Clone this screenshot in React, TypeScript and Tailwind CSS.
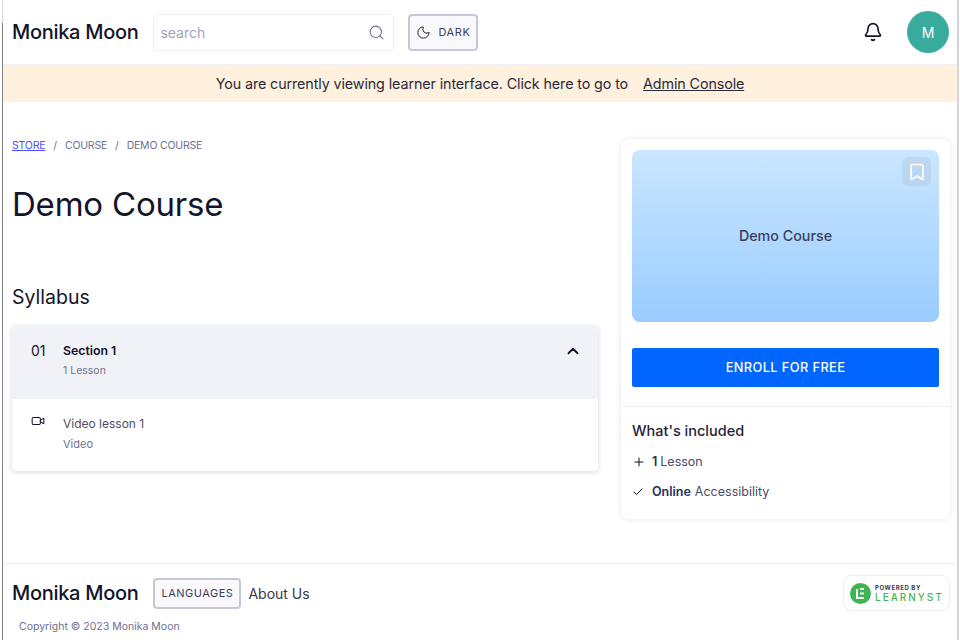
import { Bell, Bookmark, Check, ChevronUp, Moon, Plus, Search, Video } from 'lucide-react'

const font = "font-['Inter','Noto_Sans',sans-serif]"

function Brand() {
  return <span className="text-[20px] font-medium leading-none tracking-[-0.3px] text-[#14142b]">Monika Moon</span>
}

// ── Learnyst badge ──────────────────────────────────────────────────────────
function PoweredBy() {
  return (
    <div className="flex h-[36px] w-[107px] items-center gap-[4px] rounded-[8px] border border-[#eceef5] pl-[6px]">
      <svg width="21" height="21" viewBox="0 0 21 21" className="shrink-0">
        <circle cx="10.5" cy="10.5" r="10.5" fill="#3fb552" />
        <path d="M7 6v9h7M10 6h4M10 10.5h4" fill="none" stroke="#fff" strokeWidth="2" />
      </svg>
      <div className="flex flex-col">
        <span className="text-[6px] font-bold leading-[8px] tracking-[0.6px] text-[#3a3a4a]">POWERED BY</span>
        <span className="text-[10px] font-medium leading-[11px] tracking-[2px] text-[#3fb552]">LEARNYST</span>
      </div>
    </div>
  )
}

export default function App() {
  return (
    <div className={`relative flex h-[640px] w-[960px] flex-col overflow-hidden bg-white ${font}`}>
      {/* Lighter stretch of the window edge at the top left */}
      <div className="absolute top-0 left-[2px] h-[23px] w-px bg-[#d8d8d8]" />
      <div className="mr-[1px] ml-[2px] flex h-full flex-col border-r-2 border-l border-r-[#d4d4d8] border-l-[#808080]">
        {/* Header */}
        <header className="flex h-[66px] shrink-0 items-center border-b-2 border-[#eff0f6] pr-[8px] pl-[9px]">
          <Brand />
          <div className="ml-[15px] flex h-[37px] w-[241px] items-center justify-between rounded-[4px] border border-[#eff0f6] pr-[8px] pl-[6px]">
            <span className="text-[14px] text-[#a0a3bd]">search</span>
            <Search size={17} strokeWidth={1.5} className="text-[#6e7191]" />
          </div>
          <button className="ml-[14px] flex h-[37px] w-[70px] items-center justify-center gap-[7px] rounded-[4px] border-2 border-[#c5c8d8] bg-[#f9f9fc]">
            <Moon size={15} strokeWidth={1.5} className="text-[#14142b]" />
            <span className="text-[11px] font-normal tracking-[0.6px] text-[#3a3f5c]">DARK</span>
          </button>
          <Bell size={20} strokeWidth={2} className="mr-[24px] ml-auto text-[#14142b]" />
          <div className="flex h-[42px] w-[42px] items-center justify-center rounded-full bg-[#3aab9f] text-[14px] font-normal text-white">M</div>
        </header>

        {/* Admin banner */}
        <div className="flex h-[36px] shrink-0 items-center justify-center gap-[15px] bg-[#fff1de] text-[14.3px] tracking-[-0.1px] text-[#2a2a3c]">
          <span>You are currently viewing learner interface. Click here to go to</span>
          <a className="underline">Admin Console</a>
        </div>

        {/* Main */}
        <main className="flex flex-1 items-start pr-[7px] pl-[9px]">
          <div className="w-[586px] shrink-0 pt-[36px]">
            <div className="flex items-center gap-[8px] text-[10.5px] leading-[16px] tracking-[-0.2px] text-[#6e7191]">
              <a className="text-[#4d4dff] underline">STORE</a>
              <span>/</span>
              <span>COURSE</span>
              <span>/</span>
              <span>DEMO COURSE</span>
            </div>
            <h1 className="mt-[28px] text-[33px] leading-[44px] font-normal tracking-[-0.2px] text-[#14142b]">Demo Course</h1>
            <h2 className="mt-[57px] text-[19.5px] leading-[28px] font-normal text-[#14142b]">Syllabus</h2>
            <div className="mt-[15px] overflow-hidden rounded-[4px] bg-white shadow-[0_1px_5px_rgba(20,20,43,0.18)]">
              <div className="flex h-[73px] items-start bg-[#f1f2f7] pt-[16px] pr-[16px] pl-[19px]">
                <span className="w-[32px] text-[14px] leading-[18px] text-[#14142b]">01</span>
                <div className="flex-1">
                  <div className="text-[12.3px] leading-[18px] font-semibold text-[#14142b]">Section 1</div>
                  <div className="mt-[2px] text-[10.5px] leading-[18px] text-[#6e7191]">1 Lesson</div>
                </div>
                <ChevronUp size={18} strokeWidth={2.5} className="text-[#14142b]" />
              </div>
              <div className="flex h-[72px] items-start pt-[16px] pl-[19px]">
                <Video size={14} strokeWidth={1.75} className="mt-[-1px] mr-[18px] text-[#14142b]" />
                <div>
                  <div className="text-[12px] leading-[18px] text-[#4e4b66]">Video lesson 1</div>
                  <div className="mt-[2px] text-[11px] leading-[18px] text-[#6e7191]">Video</div>
                </div>
              </div>
            </div>
          </div>

          {/* Course card */}
          <aside className="mt-[37px] ml-[23px] h-[380px] w-[329px] shrink-0 rounded-[8px] bg-white pt-[11px] shadow-[0_0_6px_rgba(20,20,43,0.1)]">
            <div className="px-[11px]">
              <div className="relative flex h-[172px] items-center justify-center rounded-[8px] bg-gradient-to-b from-[#cae6ff] to-[#9accff] text-[14.3px] font-medium text-[#3a3f5c]">
                Demo Course
                <div className="absolute top-[7px] right-[8px] flex h-[29px] w-[29px] items-center justify-center rounded-[6px] bg-[#a9b8cc]/30">
                  <Bookmark size={20} strokeWidth={2} className="text-white" />
                </div>
              </div>
              <button className="mt-[26px] h-[39px] w-full rounded-[2px] bg-[#0066ff] text-[12.8px] font-medium tracking-[0.4px] text-white">ENROLL FOR FREE</button>
            </div>
            <div className="mt-[19px] border-t border-[#eff0f6] px-[11px] pt-[15px]">
              <div className="text-[14.5px] leading-[18px] font-medium text-[#262338]">What's included</div>
              <div className="mt-[13px] flex h-[18px] items-center text-[12.5px] text-[#4e4b66]">
                <Plus size={14} strokeWidth={1.75} className="mr-[6px] text-[#14142b]" />
                <b className="mr-[3px] font-semibold text-[#262f56]">1</b> Lesson
              </div>
              <div className="mt-[12px] flex h-[18px] items-center text-[12.5px] text-[#4e4b66]">
                <Check size={12} strokeWidth={2} className="mr-[8px] text-[#14142b]" />
                <b className="mr-[4px] font-semibold text-[#262f56]">Online</b> Accessibility
              </div>
            </div>
          </aside>
        </main>

        {/* Footer */}
        <footer className="h-[77px] shrink-0 border-t border-[#eff0f6] pt-[11px] pr-[7px] pl-[9px]">
          <div className="flex items-center">
            <Brand />
            <button className="ml-[15px] flex h-[31px] w-[88px] items-center justify-center rounded-[4px] border-2 border-[#c5c8d8] bg-[#f9f9fc] text-[11px] font-normal tracking-[0.5px] text-[#3a3f5c]">LANGUAGES</button>
            <span className="ml-[7px] text-[14px] text-[#3a3a4a]">About Us</span>
            <div className="ml-auto">
              <PoweredBy />
            </div>
          </div>
          <div className="mt-[8px] pl-[7px] text-[10.5px] leading-[16px] text-[#6e7191]">Copyright © 2023 Monika Moon</div>
        </footer>
      </div>
    </div>
  )
}
